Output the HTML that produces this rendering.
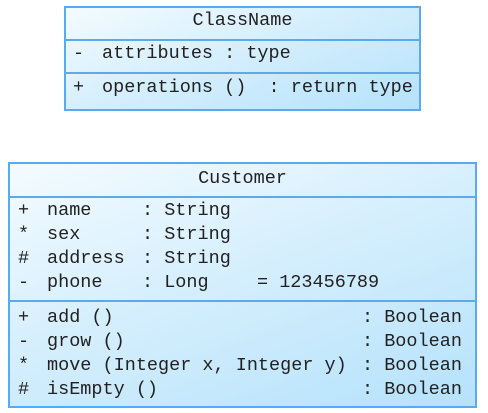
<!DOCTYPE html>
<html><head><style>
body{margin:0;width:488px;height:413px;background:#fff;position:relative;overflow:hidden;font-family:"Liberation Mono",monospace;font-size:18.5px;color:#222}
.box{position:absolute;border:2px solid #5aaaf0;background:linear-gradient(160deg,#f4fbff 0%,#d6effd 45%,#b5e2fb 100%);box-sizing:border-box}
.ln{position:absolute;left:0;right:0;height:2px;background:#5aaaf0}
span{position:absolute;white-space:pre;line-height:20px}
</style></head><body>
<div class="box" style="left:64px;top:6px;width:357px;height:105px">
  <div class="ln" style="top:31px"></div>
  <div class="ln" style="top:64px"></div>
</div>
<span style="left:0;width:485px;text-align:center;top:11px">ClassName</span>
<span style="left:73px;top:44px">-</span><span style="left:102px;top:44px">attributes : type</span>
<span style="left:73px;top:78px">+</span><span style="left:102px;top:78px">operations ()  : return type</span>

<div class="box" style="left:8px;top:162px;width:469px;height:246px">
  <div class="ln" style="top:32px"></div>
  <div class="ln" style="top:136px"></div>
</div>
<span style="left:8px;width:469px;text-align:center;top:169px">Customer</span>
<span style="left:18px;top:201px">+</span><span style="left:47px;top:201px">name</span><span style="left:142px;top:201px">: String</span>
<span style="left:18px;top:225px">*</span><span style="left:47px;top:225px">sex</span><span style="left:142px;top:225px">: String</span>
<span style="left:18px;top:249px">#</span><span style="left:47px;top:249px">address</span><span style="left:142px;top:249px">: String</span>
<span style="left:18px;top:273px">-</span><span style="left:47px;top:273px">phone</span><span style="left:142px;top:273px">: Long</span><span style="left:257px;top:273px">= 123456789</span>
<span style="left:18px;top:308px">+</span><span style="left:47px;top:308px">add ()</span><span style="left:362px;top:308px">: Boolean</span>
<span style="left:18px;top:332px">-</span><span style="left:47px;top:332px">grow ()</span><span style="left:362px;top:332px">: Boolean</span>
<span style="left:18px;top:356px">*</span><span style="left:47px;top:356px">move (Integer x, Integer y)</span><span style="left:362px;top:356px">: Boolean</span>
<span style="left:18px;top:380px">#</span><span style="left:47px;top:380px">isEmpty ()</span><span style="left:362px;top:380px">: Boolean</span>
</body></html>
